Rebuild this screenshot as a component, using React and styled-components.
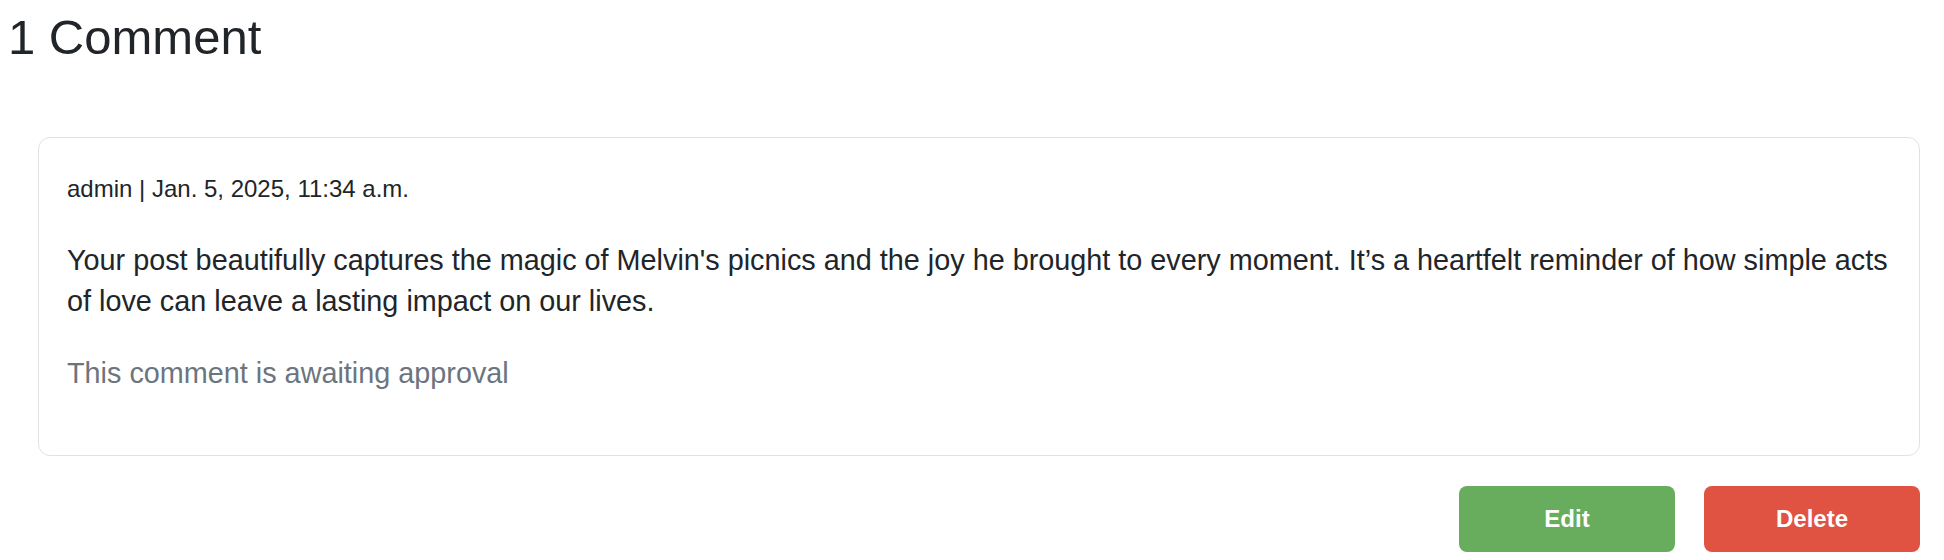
import React from "react";
import styled, { createGlobalStyle } from "styled-components";

const GlobalStyle = createGlobalStyle`
  body {
    margin: 8px;
    background: #ffffff;
    font-family: "Liberation Sans", Arial, Helvetica, sans-serif;
    color: #212529;
  }
`;

const Section = styled.section`
  display: flex;
  flex-direction: column;
`;

const Title = styled.h2`
  margin: 0;
  font-size: 49px;
  font-weight: 400;
  line-height: 1.2;
  color: #212529;
`;

const CommentBlock = styled.div`
  margin: 70px 16px 0 30px;
  display: flex;
  flex-direction: column;
`;

const Card = styled.div`
  border: 1px solid #dfe2e5;
  border-radius: 12px;
  padding: 31px 16px 61px 28px;
  background: #fff;
`;

const Meta = styled.p`
  margin: 0;
  font-size: 24px;
  line-height: 40px;
`;

const Body = styled.p`
  margin: 31px 0 0;
  font-size: 28.8px;
  line-height: 41px;
`;

const Note = styled.p`
  margin: 31px 0 0;
  font-size: 28.8px;
  line-height: 41px;
  color: #6c757d;
`;

const Actions = styled.div`
  display: flex;
  justify-content: flex-end;
  gap: 29px;
  margin-top: 30px;
`;

const Button = styled.button`
  width: 216px;
  height: 66px;
  border: none;
  border-radius: 8px;
  background: ${(p) => (p.$variant === "danger" ? "#e05343" : "#68ad5d")};
  color: #fff;
  font-family: "Liberation Sans", Arial, sans-serif;
  font-size: 24px;
  font-weight: 700;
  cursor: pointer;
`;

export default function App() {
  return (
    <>
      <GlobalStyle />
      <Section>
        <Title>1 Comment</Title>
        <CommentBlock>
          <Card>
            <Meta>admin | Jan. 5, 2025, 11:34 a.m.</Meta>
            <Body>
              Your post beautifully captures the magic of Melvin's picnics and the joy he brought to every moment. It’s a heartfelt reminder of how simple acts of love can leave a lasting impact on our lives.
            </Body>
            <Note>This comment is awaiting approval</Note>
          </Card>
          <Actions>
            <Button>Edit</Button>
            <Button $variant="danger">Delete</Button>
          </Actions>
        </CommentBlock>
      </Section>
    </>
  );
}
